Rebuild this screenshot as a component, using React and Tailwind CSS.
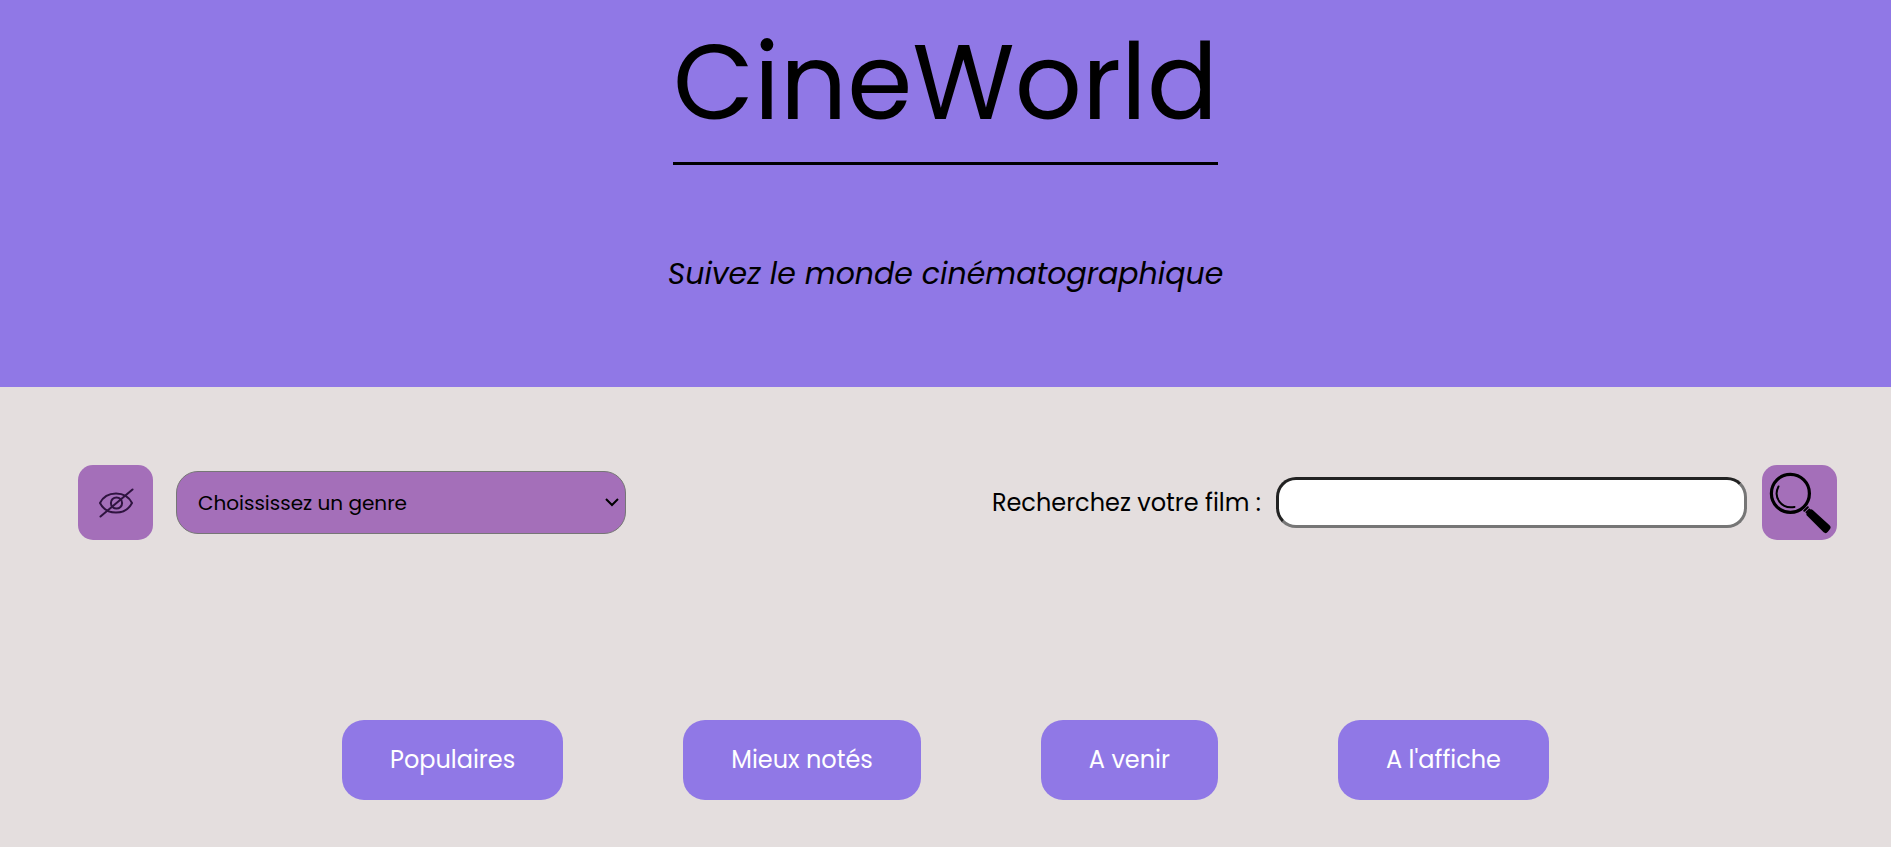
const categories = ["Populaires", "Mieux notés", "A venir", "A l'affiche"];

function HiddenEyeIcon() {
  return (
    <svg viewBox="0 0 36 30" className="h-[30px] w-9" fill="none" stroke="#2f1440" strokeWidth="2" strokeLinecap="round" aria-hidden="true">
      <path d="M2 15C5 9 11 5.500 18 5.500S31 9 34 15C31 21 25 24.500 18 24.500S5 21 2 15Z" />
      <circle cx="18.500" cy="15" r="5.600" />
      <path d="M2.500 28.500 34.500 1.500" />
    </svg>
  );
}

function MagnifierIcon() {
  return (
    <svg viewBox="0 0 75 75" className="size-full" fill="none" stroke="#000" strokeLinecap="round" aria-hidden="true">
      <circle cx="28.400" cy="28.400" r="19" strokeWidth="3.200" />
      <path d="M16.500 21.500C11 32 19 44.500 32.500 42" strokeWidth="2" />
      <path d="M42.300 45.800 45.800 42.300" strokeWidth="2" />
      <path d="M44.300 47.400 47.400 44.300" strokeWidth="1.600" />
      <path d="M47.500 49 49 47.500 65.500 62.500 63.500 65Z" fill="#000" strokeWidth="6" strokeLinejoin="round" />
    </svg>
  );
}

export default function App() {
  return (
    <div className="min-h-screen bg-[#e4dede] font-['Poppins','Inter',sans-serif] text-black">
      <header className="flex h-[387px] flex-col items-center bg-[#9078e6]">
        <h1 className="mt-4 border-b-[3px] border-black pb-3 text-[105px] leading-[134px]">CineWorld</h1>
        <p className="mt-[86px] text-[30px] leading-[45px] italic">Suivez le monde cinématographique</p>
      </header>
      <main>
        <div className="flex items-center justify-between pt-[78px] pr-[54px] pl-[78px]">
          <div className="flex items-center gap-[23px]">
            <button type="button" aria-label="Masquer" className="flex size-[75px] items-center justify-center rounded-[15px] bg-[#a46fb9]">
              <HiddenEyeIcon />
            </button>
            <div className="grid items-center">
              <select aria-label="Genre" className="col-start-1 row-start-1 h-[63px] w-[450px] appearance-none rounded-[22px] border border-[#767676] bg-[#a46fb9] px-[21px] text-xl">
                <option>Choississez un genre</option>
              </select>
              <svg viewBox="0 0 14 9" className="pointer-events-none col-start-1 row-start-1 mr-[7px] h-[9px] w-3.5 justify-self-end" fill="none" stroke="#000" strokeWidth="2" aria-hidden="true">
                <path d="m1 1 6 6 6-6" />
              </svg>
            </div>
          </div>
          <form className="flex items-center gap-[15px]">
            <label htmlFor="film" className="text-2xl">Recherchez votre film :</label>
            <input id="film" type="text" className="h-[51px] w-[471px] rounded-[20px] border-[3px] border-t-[#222] border-r-[#767676] border-b-[#767676] border-l-[#222] bg-white px-4 text-xl" />
            <button type="button" aria-label="Rechercher" className="size-[75px] rounded-[15px] bg-[#a46fb9]">
              <MagnifierIcon />
            </button>
          </form>
        </div>
        <nav className="flex justify-center gap-[120px] pt-[180px] pb-[46px]">
          {categories.map((name) => (
            <button key={name} type="button" className="h-20 rounded-[22px] bg-[#9078e6] px-12 text-2xl text-white">{name}</button>
          ))}
        </nav>
      </main>
    </div>
  );
}
